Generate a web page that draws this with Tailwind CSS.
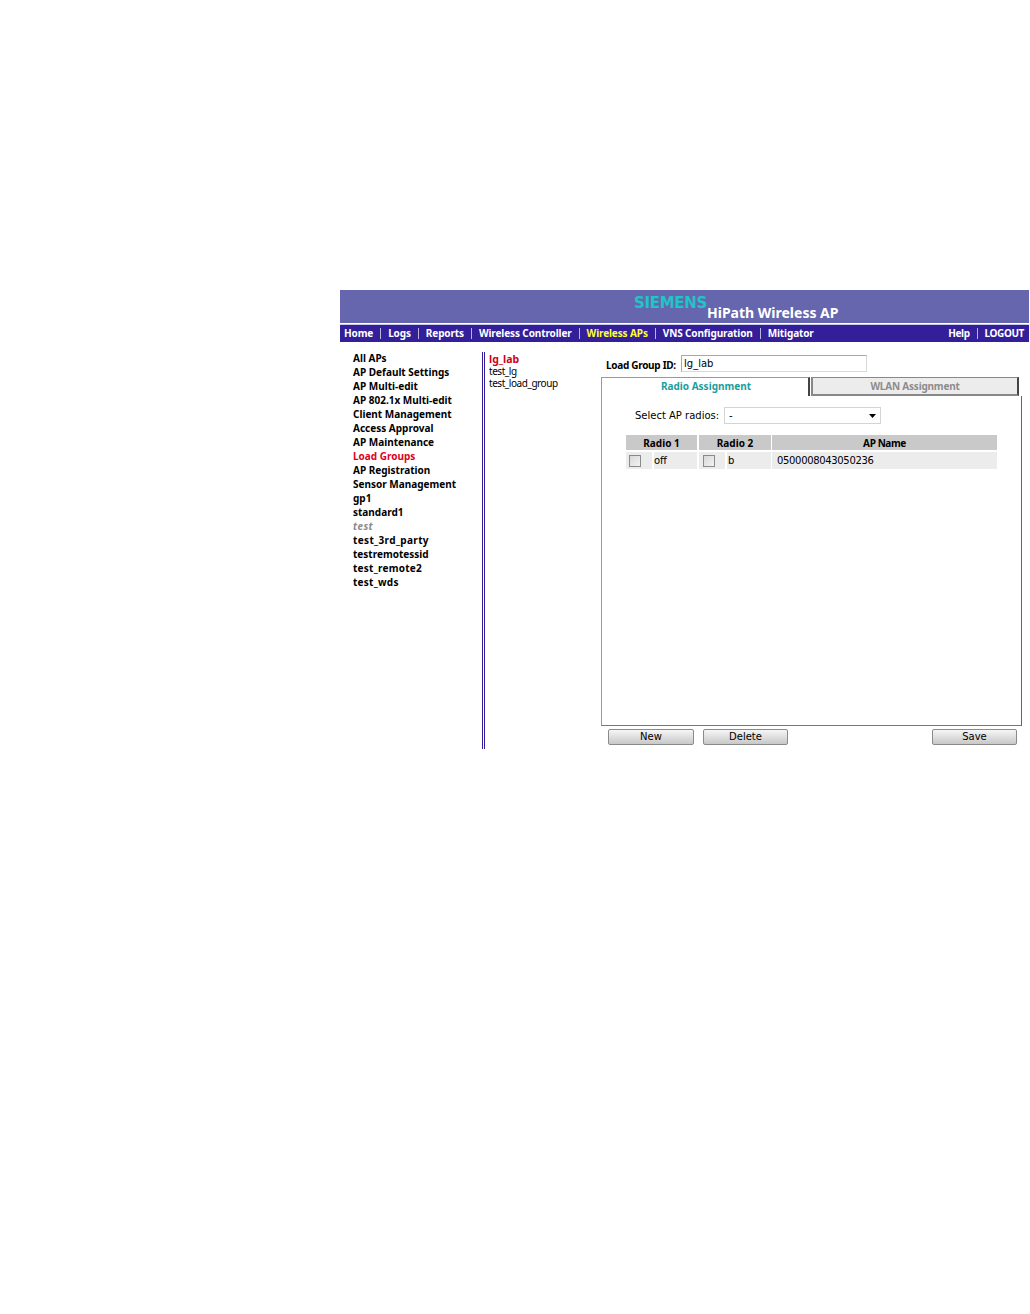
<!DOCTYPE html>
<html lang="en">
<head>
<meta charset="utf-8"/>
<title>HiPath Wireless AP</title>
<script src="https://cdn.jsdelivr.net/npm/@tailwindcss/browser@4"></script>
</head>
<body class="bg-white font-['DejaVu_Sans',sans-serif] text-black overflow-hidden h-[1314px]">
<div class="ml-[340px] mt-[290px] w-[689px]">
  <!-- banner -->
  <header class="h-[33px] bg-[#6666ae] relative">
    <span class="absolute left-[294px] top-[4px] text-[15px] leading-[18px] font-bold text-[#22c4c4] tracking-[-0.3px]">SIEMENS</span>
    <span class="absolute left-[367px] top-[15px] font-['Noto_Sans',sans-serif] text-[14px] leading-[16px] font-bold text-white">HiPath Wireless AP</span>
  </header>
  <nav class="mt-[2px] h-[17px] bg-[#331f99] flex items-center justify-between pl-[4px] pr-[5px] font-['Noto_Sans',sans-serif] text-[10px] leading-[17px] font-bold text-white shadow-[0_-1px_0_#c9c9e4]">
    <div class="flex items-center tracking-[-0.12px]">
      <a>Home</a><i class="w-px h-[11px] bg-[#b9b4dc] mx-[7px]"></i>
      <a>Logs</a><i class="w-px h-[11px] bg-[#b9b4dc] mx-[7px]"></i>
      <a>Reports</a><i class="w-px h-[11px] bg-[#b9b4dc] mx-[7px]"></i>
      <a>Wireless Controller</a><i class="w-px h-[11px] bg-[#b9b4dc] mx-[7px]"></i>
      <a class="text-[#ffff33]">Wireless APs</a><i class="w-px h-[11px] bg-[#b9b4dc] mx-[7px]"></i>
      <a>VNS Configuration</a><i class="w-px h-[11px] bg-[#b9b4dc] mx-[7px]"></i>
      <a>Mitigator</a>
    </div>
    <div class="flex items-center tracking-[-0.4px]">
      <a>Help</a><i class="w-px h-[11px] bg-[#b9b4dc] mx-[7px]"></i>
      <a>LOGOUT</a>
    </div>
  </nav>

  <div class="flex mt-[10px] h-[397px]">
    <!-- left menu -->
    <ul class="w-[142px] pl-[13px] -mt-[1px] font-['Noto_Sans',sans-serif] text-[10px] leading-[14px] font-bold">
      <li>All APs</li>
      <li>AP Default Settings</li>
      <li>AP Multi-edit</li>
      <li>AP 802.1x Multi-edit</li>
      <li>Client Management</li>
      <li>Access Approval</li>
      <li>AP Maintenance</li>
      <li class="text-[#e0001a]">Load Groups</li>
      <li>AP Registration</li>
      <li>Sensor Management</li>
      <li>gp1</li>
      <li>standard1</li>
      <li class="text-[#8c8c8c] italic tracking-[0.4px]">test</li>
      <li class="tracking-[0.35px]">test_3rd_party</li>
      <li>testremotessid</li>
      <li class="tracking-[0.25px]">test_remote2</li>
      <li class="tracking-[0.25px]">test_wds</li>
    </ul>

    <!-- load group list -->
    <ul class="w-[119px] border-l-[3px] border-double border-[#331f99] pl-[4px] pt-[1px] font-['Noto_Sans',sans-serif] text-[10px] leading-[12px] tracking-[-0.45px]">
      <li class="text-[#d0001a] text-[10.500px] font-bold tracking-normal">lg_lab</li>
      <li>test_lg</li>
      <li>test_load_group</li>
    </ul>

    <!-- detail panel -->
    <section class="w-[421px]">
      <div class="flex items-center h-[17px] mt-[3px] ml-[5px]">
        <label class="w-[75px] whitespace-nowrap font-['Noto_Sans',sans-serif] text-[10px] tracking-[-0.3px] font-bold pt-[3px]">Load Group ID:</label>
        <div class="w-[186px] h-[17px] border border-[#d8d8d8] border-t-[#a8a8a8] border-l-[#a8a8a8] px-[2px] text-[10px] leading-[15px]">lg_lab</div>
      </div>
      <div class="flex mt-[5px] h-[19px]">
        <div class="w-[209px] pl-[2px] border-t border-l border-r-2 border-[#9a9a9a] border-r-[#444] text-center font-['Noto_Sans',sans-serif] text-[10px] leading-[17px] font-bold text-[#1a9e9e]">Radio Assignment</div>
        <div class="w-[208px] ml-[1px] border-t border-l-2 border-b-2 border-r-2 border-[#888] border-r-[#444] bg-[#ececec] text-center font-['Noto_Sans',sans-serif] text-[10px] tracking-[-0.2px] leading-[17px] font-bold text-[#8c8c8c]">WLAN Assignment</div>
      </div>
      <div class="h-[330px] pt-[11px] border-l border-b border-r border-[#9a9a9a] border-r-[#666] border-b-[#777]">
        <div class="flex items-center h-[17px] ml-[33px]">
          <span class="w-[89px] text-[10px]">Select AP radios:</span>
          <div class="w-[157px] h-[17px] border border-[#d4d4d4] flex items-center justify-between px-[4px] text-[10px]">
            <span>-</span>
            <svg width="7" height="4" viewBox="0 0 7 4"><path d="M0 0h7L3.500 4z" fill="#000"/></svg>
          </div>
        </div>
        <div class="mt-[11px] ml-[24px] w-[371px] text-[10px]">
          <div class="flex h-[15px] font-['Noto_Sans',sans-serif] text-[10px] font-bold leading-[16px] text-center bg-white">
            <div class="w-[71px] bg-[#c9c9c9]">Radio 1</div>
            <div class="w-[72px] ml-[2px] bg-[#c9c9c9]">Radio 2</div>
            <div class="w-[225px] ml-[1px] bg-[#c9c9c9] tracking-[-0.4px]">AP Name</div>
          </div>
          <div class="flex h-[17px] mt-[2px] leading-[17px]">
            <div class="w-[26px] bg-[#ececec] flex items-center pl-[3px]"><span class="w-[12px] h-[12px] border border-[#8a8a8a] bg-gradient-to-br from-[#d8d8d8] to-[#f2f2f2]"></span></div>
            <div class="w-[43px] ml-[2px] bg-[#ececec]">off</div>
            <div class="w-[26px] ml-[2px] bg-[#ececec] flex items-center pl-[4px]"><span class="w-[12px] h-[12px] border border-[#8a8a8a] bg-gradient-to-br from-[#d8d8d8] to-[#f2f2f2]"></span></div>
            <div class="w-[44px] ml-[2px] pl-[1px] bg-[#ececec]">b</div>
            <div class="w-[225px] ml-[1px] bg-[#ececec] pl-[5px] tracking-[-0.33px]">0500008043050236</div>
          </div>
        </div>
      </div>
      <div class="flex mt-[3px] ml-[7px] text-[10px]">
        <button class="w-[86px] h-[16px] leading-[14px] border border-[#8a8a8a] rounded-[2px] bg-gradient-to-b from-[#f6f6f6] to-[#c8c8c8]">New</button>
        <button class="w-[85px] h-[16px] leading-[14px] ml-[9px] border border-[#8a8a8a] rounded-[2px] bg-gradient-to-b from-[#f6f6f6] to-[#c8c8c8]">Delete</button>
        <button class="w-[85px] h-[16px] leading-[14px] ml-[144px] border border-[#8a8a8a] rounded-[2px] bg-gradient-to-b from-[#f6f6f6] to-[#c8c8c8]">Save</button>
      </div>
    </section>
  </div>
</div>
</body>
</html>
